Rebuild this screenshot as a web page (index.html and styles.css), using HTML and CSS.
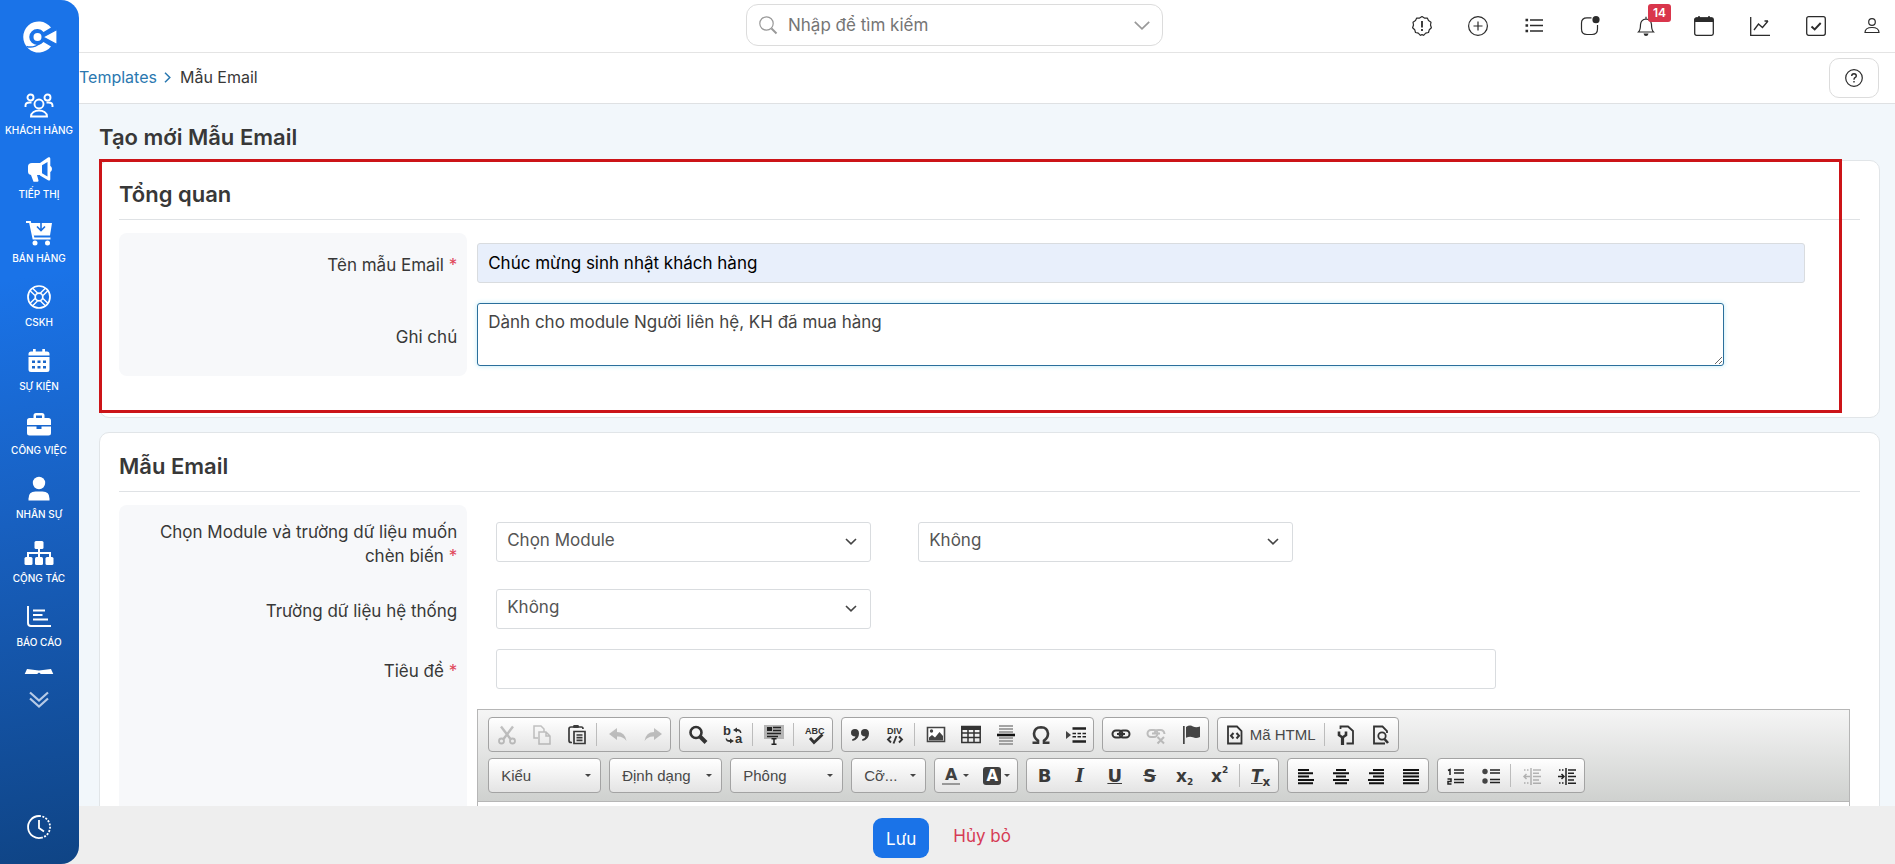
FILE: index.html
```html
<!DOCTYPE html>
<html lang="vi">
<head>
<meta charset="utf-8">
<meta name="viewport" content="width=device-width, initial-scale=1">
<title>Tạo mới Mẫu Email</title>
<link rel="stylesheet" href="styles.css">
</head>
<body>
<div class="app">
  <aside class="sidebar">
    <a class="logo" href="#" aria-label="CRM"><svg viewBox="0 0 35 32"><path d="M29 6.500A15.500 15.500 0 1 0 29 25.500L21.500 21A8 8 0 1 1 21.500 11Z" fill="#fff"/><path d="M4.500 25.500q7 2 14-3.500" stroke="#1a73e8" stroke-width="1.500" fill="none"/><path d="M21 16 35 8.500v15Z" fill="#fff" stroke="#1a73e8" stroke-width="1.200"/><circle cx="15.500" cy="16" r="4" fill="#fff"/></svg></a>
    <nav class="menu">
      <a class="menu-item" href="#"><svg class="menu-icon" viewBox="0 0 30 26" fill="none" stroke="#fff" stroke-width="1.900"><circle cx="15" cy="12" r="4.500"/><circle cx="6.500" cy="5.500" r="3"/><circle cx="23.500" cy="5.500" r="3"/><path d="M7 24.500c0-8 16-8 16 0ZM1.500 15v-1.500q0-3 4-3h2M28.500 15v-1.500q0-3-4-3h-2"/></svg><span>KHÁCH HÀNG</span></a>
      <a class="menu-item" href="#"><svg class="menu-icon" viewBox="0 0 30 26" fill="#fff"><path fill-rule="evenodd" d="M24 1.500c1.500-.7 2.300-.2 2.300 1.300V10c2.200 1 2.200 5 0 6v7c0 1.500-1 2-2.300 1.200L16 19.500V7ZM23.500 6 18 9.200v8l5.500 3.300Z"/><path d="M17 7v12h-4l1.500 5.500q0 1.300-1.200 1.300H9.500L7 19q-3-.5-3-3.500v-5Q4 7 8 7Z"/></svg><span>TIẾP THỊ</span></a>
      <a class="menu-item" href="#"><svg class="menu-icon" viewBox="0 0 30 26"><path d="M2 2h4l3.500 16.500h17" fill="none" stroke="#fff" stroke-width="2"/><path d="M6.500 3H28l-2 12.500H9.500Z" fill="#fff"/><path d="M17 1v9m-4-3.500 4 4 4-4" fill="none" stroke="#1a6edf" stroke-width="1.600"/><circle cx="11" cy="23" r="2.500" fill="#fff"/><circle cx="23.500" cy="23" r="2.500" fill="#fff"/></svg><span>BÁN HÀNG</span></a>
      <a class="menu-item" href="#"><svg class="menu-icon" viewBox="0 0 30 26" fill="none" stroke="#fff" stroke-width="1.700"><circle cx="15" cy="13" r="11"/><circle cx="15" cy="13" r="3.800"/><path d="m16.500 9 4.600-4.600M19 11.500l4.600-4.600M13.500 9 8.900 4.400M11 11.500 6.400 6.900M16.500 17l4.600 4.600M19 14.500l4.600 4.600M13.500 17l-4.600 4.600M11 14.500l-4.600 4.600" stroke-width="1.400"/></svg><span>CSKH</span></a>
      <a class="menu-item" href="#"><svg class="menu-icon" viewBox="0 0 30 26"><path d="M4.500 7.500V6q0-2.500 2.500-2.500h2V1h2.700v2.500h6.600V1H21v2.500h2q2.500 0 2.500 2.500v1.500ZM4.500 9h21v12.500q0 2.500-2.500 2.500H7q-2.500 0-2.500-2.500Z" fill="#fff"/><path d="M8 12.500h3V15H8zm5.500 0h3V15h-3zm5.500 0h3V15h-3zM8 18h3v2.500H8zm5.500 0h3v2.500h-3zm5.500 0h3v2.500h-3z" fill="#1b66c9"/></svg><span>SỰ KIỆN</span></a>
      <a class="menu-item" href="#"><svg class="menu-icon" viewBox="0 0 30 26"><path d="M9.500 6V3.500Q9.500 1 12 1h6q2.500 0 2.500 2.500V6h4Q27 6 27 8.500V13H3V8.500Q3 6 5.500 6Zm2.500 0h6V3.500h-6Z" fill="#fff" fill-rule="evenodd"/><path d="M3 14.500h9.500V17h5v-2.500H27v6.500q0 2.500-2.500 2.500h-19Q3 23.500 3 21Z" fill="#fff"/></svg><span>CÔNG VIỆC</span></a>
      <a class="menu-item" href="#"><svg class="menu-icon" viewBox="0 0 30 26" fill="#fff"><circle cx="15" cy="7" r="6.200"/><path d="M4.500 24.500v-2q0-7 7-7h7q7 0 7 7v2Z"/></svg><span>NHÂN SỰ</span></a>
      <a class="menu-item" href="#"><svg class="menu-icon" viewBox="0 0 30 26"><path d="M15 7v10M4 17v-4h22v4" fill="none" stroke="#fff" stroke-width="2"/><g fill="#fff"><rect x="10.500" y="1" width="9" height="8" rx="1.500"/><rect y="17" x=".5" width="8" height="8" rx="1.500"/><rect x="11" y="17" width="8" height="8" rx="1.500"/><rect x="21.500" y="17" width="8" height="8" rx="1.500"/></g></svg><span>CỘNG TÁC</span></a>
      <a class="menu-item" href="#"><svg class="menu-icon" viewBox="0 0 30 26" fill="none" stroke="#fff" stroke-width="1.900"><path d="M4 2v17q0 3 3 3h20M9 6.500h12M9 11h9.500M9 15.500h15"/></svg><span>BÁO CÁO</span></a>
      <a class="menu-item" href="#" aria-label="Kho"><svg class="menu-icon" viewBox="0 0 30 26" fill="#fff"><path d="M3 1l12 1.500L27 1l2.500 5.500h-12L15 4.500l-2.500 2h-12Z"/><path d="M3 11l10 2 2-3 2 3 10-2v10l-12 4-12-4Z"/></svg></a>
    </nav>
    <button class="side-button" aria-label="Xem thêm"><svg class="more-icon" viewBox="0 0 20 17" fill="none" stroke="#b6cae6" stroke-width="2.200"><path d="m1 1.500 9 8 9-8M1 7.500l9 8 9-8"/></svg></button>
    <button class="side-button side-clock" aria-label="Lịch sử"><svg class="clock-icon" viewBox="0 0 24 24" fill="none" stroke="#fff" stroke-width="1.800"><path d="M12 1a11 11 0 1 0 3 21.600M12 5v8l5 3.500"/><path d="M12 1a11 11 0 0 1 3 21.600" stroke-dasharray="2 1.400"/></svg></button>
  </aside>

  <div class="page">
    <header class="topbar">
      <form class="search">
        <svg class="search-icon" viewBox="0 0 18 18" fill="none" stroke="#999"><circle cx="7.500" cy="7.500" r="6.700" stroke-width="1.200"/><path d="m12.500 12.500 5 5" stroke-width="2"/></svg>
        <input class="search-input" type="search" placeholder="Nhập để tìm kiếm" aria-label="Nhập để tìm kiếm">
        <button class="search-toggle" type="button" aria-label="Tùy chọn"><svg viewBox="0 0 16 9" fill="none" stroke="#999" stroke-width="1.700"><path d="m.8.800 7.200 7 7.200-7"/></svg></button>
      </form>
      <div class="tools">
        <button class="tool" aria-label="Thông tin"><svg viewBox="0 0 20 20" fill="none" stroke="#2b2b2b" stroke-width="1.200"><path d="M10 .6 12.400 2.100 15.300 2 16.500 4.600 19 6.200 18.500 9 19.400 11.700 17.300 13.700 16.500 16.500 13.700 17.200 11.600 19.300 10 18.600 8.400 19.300 6.300 17.200 3.500 16.500 2.700 13.700.6 11.700 1.500 9 1 6.200 3.500 4.600 4.700 2 7.600 2.100Z" stroke-linejoin="round"/><path d="M10 5v6.500m0 1.500v2" stroke-width="1.800"/></svg></button>
        <button class="tool" aria-label="Thêm"><svg viewBox="0 0 20 20" fill="none" stroke="#2b2b2b" stroke-width="1.200"><circle cx="10" cy="10" r="9.400"/><path d="M10 5.500v9M5.500 10h9"/></svg></button>
        <button class="tool" aria-label="Danh sách"><svg viewBox="0 0 20 20" fill="none" stroke="#2b2b2b"><path d="M6 4h13M6 9.500h13M6 15h13" stroke-width="1.300"/><path d="M1.500 4h2.600M1.500 9.500h2.600M1.500 15h2.600" stroke-width="2.300"/></svg></button>
        <button class="tool" aria-label="Trạng thái"><svg viewBox="0 0 20 20" fill="none" stroke="#2b2b2b" stroke-width="1.200"><path d="M11.500 1.800H7Q1.500 1.800 1.500 7v6q0 5.500 5.500 5.500h5q5.500 0 5.500-5.500V9"/><circle cx="16" cy="3.700" r="3.600" fill="#2b2b2b" stroke="none"/></svg></button>
        <button class="tool tool-bell" aria-label="Thông báo"><svg viewBox="0 0 20 20" fill="none" stroke="#2b2b2b" stroke-width="1.200"><path d="M2.500 16q2-2 2-7.500Q5 3.500 10 3q5 .5 5.500 5.500 0 5.500 2 7.500ZM10 3V.800"/><path d="M7.500 17.500h5q-.5 2.500-2.500 2.500t-2.500-2.500Z" fill="#2b2b2b" stroke="none"/></svg><span class="badge">14</span></button>
        <button class="tool" aria-label="Lịch"><svg viewBox="0 0 20 20"><rect x=".7" y="2" width="18.600" height="17.300" rx="1.800" fill="none" stroke="#2b2b2b" stroke-width="1.300"/><path d="M.5 6V3.500Q.5 1.500 2.500 1.500H4V.300h2v1.200h8V.300h2v1.200h1.500q2 0 2 2V6Z" fill="#2b2b2b"/></svg></button>
        <button class="tool" aria-label="Thống kê"><svg viewBox="0 0 20 20" fill="none" stroke="#2b2b2b" stroke-width="1.300"><path d="M.7 1v18.300H20M4 14l4.500-6 4 3.500L18 5M14.500 5H18"/></svg></button>
        <button class="tool" aria-label="Công việc"><svg viewBox="0 0 20 20" fill="none" stroke="#2b2b2b" stroke-width="1.300"><rect x=".7" y=".7" width="18.600" height="18.600" rx="2"/><path d="m5.500 10.500 3.200 3 6-6.500" stroke-width="1.900"/></svg></button>
        <button class="tool" aria-label="Tài khoản"><svg viewBox="0 0 20 20" fill="none" stroke="#2b2b2b" stroke-width="1.200"><circle cx="10" cy="6" r="3.300"/><path d="M3 16.500q0-5 7-5t7 5Z"/></svg></button>
      </div>
    </header>

    <div class="crumbs">
      <nav class="crumb-list" aria-label="Đường dẫn"><a class="crumb-link" href="#">Templates</a><svg class="crumb-sep" viewBox="0 0 7 11" fill="none" stroke="#2a78b0" stroke-width="1.500"><path d="m1 .800 4.800 4.700L1 10.200"/></svg><span>Mẫu Email</span></nav>
      <button class="help" aria-label="Trợ giúp"><svg viewBox="0 0 18 18" fill="none" stroke="#2b2b2b" stroke-width="1.200"><circle cx="9" cy="9" r="8.300"/><path d="M6.700 7q0-2.300 2.300-2.300T11.300 7q0 1-1.300 1.700Q9 9.300 9 10.700M9 11.900v1.500" stroke-width="1.400"/></svg></button>
    </div>

    <main class="content">
      <h1 class="page-title">Tạo mới Mẫu Email</h1>

      <section class="card card-overview">
        <h2 class="card-title">Tổng quan</h2>
        <div class="row row-first">
          <label class="row-label" for="name"><span>Tên mẫu Email <b class="req">*</b></span></label>
          <div class="row-field"><input class="control control-filled" id="name" type="text" value="Chúc mừng sinh nhật khách hàng"></div>
        </div>
        <div class="row row-last">
          <label class="row-label" for="note">Ghi chú</label>
          <div class="row-field"><textarea class="control control-note" id="note" autofocus>Dành cho module Người liên hệ, KH đã mua hàng</textarea></div>
        </div>
        <div class="highlight"></div>
      </section>

      <section class="card">
        <h2 class="card-title">Mẫu Email</h2>
        <div class="row row-first row-module">
          <label class="row-label" for="module"><span>Chọn Module và trường dữ liệu muốn chèn biến <b class="req">*</b></span></label>
          <div class="row-field row-field-inset">
            <div class="select"><select class="control" id="module"><option>Chọn Module</option></select><svg class="select-arrow" viewBox="0 0 12 7"><path d="m1 1 5 4.800L11 1"/></svg></div>
            <div class="select"><select class="control" aria-label="Trường dữ liệu"><option>Không</option></select><svg class="select-arrow" viewBox="0 0 12 7"><path d="m1 1 5 4.800L11 1"/></svg></div>
          </div>
        </div>
        <div class="row">
          <label class="row-label" for="system">Trường dữ liệu hệ thống</label>
          <div class="row-field row-field-inset">
            <div class="select"><select class="control" id="system"><option>Không</option></select><svg class="select-arrow" viewBox="0 0 12 7"><path d="m1 1 5 4.800L11 1"/></svg></div>
          </div>
        </div>
        <div class="row">
          <label class="row-label" for="subject"><span>Tiêu đề <b class="req">*</b></span></label>
          <div class="row-field row-field-inset"><input class="control control-subject" id="subject" type="text"></div>
        </div>
        <div class="row row-last row-editor">
          <div class="row-label"></div>
          <div class="row-field">
            <div class="editor">
              <div class="toolbar" role="toolbar">
                <div class="tb-row">
                  <div class="tb-group">
                    <button class="tb off" aria-label="Cắt"><svg viewBox="0 0 20 20" fill="none" stroke="#444" stroke-width="2.400"><path d="M4 1.500 13.500 14M16 1.500 6.500 14"/><circle cx="4.500" cy="16" r="2.500" stroke-width="1.800"/><circle cx="15.500" cy="16" r="2.500" stroke-width="1.800"/></svg></button>
                    <button class="tb off" aria-label="Sao chép"><svg viewBox="0 0 20 20" fill="none" stroke="#444" stroke-width="1.500"><path d="M6 13H2V1h7l3 3v3M7 7h7l4 4v8H7ZM14 7v4h4"/></svg></button>
                    <button class="tb" aria-label="Dán"><svg viewBox="0 0 20 20" fill="none" stroke="#3a3a3a" stroke-width="1.700"><path d="M5 17.500H4q-2 0-2-2V4q0-2 2-2h10.500q1.500 0 1.500 2"/><path d="M6 1.500h6M7 6.500h11v12H7ZM9.500 10h6m-6 2.700h6m-6 2.700h6"/><path d="M6.500 0h5v3h-5z" fill="#3a3a3a" stroke="none"/></svg></button>
                    <i class="tb-sep"></i>
                    <button class="tb off" aria-label="Hoàn tác"><svg viewBox="0 0 20 20" fill="#444"><path d="m1 9 8-6v4q8 0 9.500 9Q15 11 9 11.500V15Z"/></svg></button>
                    <button class="tb off" aria-label="Làm lại"><svg viewBox="0 0 20 20" fill="#444"><path d="m19 9-8-6v4q-8 0-9.500 9Q5 11 11 11.500V15Z"/></svg></button>
                  </div>
                  <div class="tb-group">
                    <button class="tb" aria-label="Tìm kiếm"><svg viewBox="0 0 20 20" fill="none" stroke="#333"><circle cx="8" cy="7.500" r="5.500" stroke-width="2.600"/><path d="m12 11.500 6 6" stroke-width="4"/></svg></button>
                    <button class="tb" aria-label="Thay thế"><svg viewBox="0 0 20 20" fill="#333"><text x="0" y="10" class="glyph glyph-lg">b</text><text x="12" y="18" class="glyph glyph-lg">a</text><path d="m10 5 4-2.500V4q4 0 4.500 4H17q0-2-3-2v1.500ZM11 16l-4 2.500V17q-4 0-4.500-3.500H4Q4 15 7 15v-1.500Z"/></svg></button>
                    <i class="tb-sep"></i>
                    <button class="tb" aria-label="Chọn tất cả"><svg viewBox="0 0 20 20"><path d="M0 0h20v14H0z" fill="#b5b5b5"/><path d="M3 2h5v4H3z" fill="#222"/><path d="M9 2.500h8M9 5.500h8M3 8.500h14M3 11.500h11M10 13v6M7.500 13.700h5M7.500 19.200h5" stroke="#222" stroke-width="1.500" fill="none"/></svg></button>
                    <i class="tb-sep"></i>
                    <button class="tb" aria-label="Kiểm tra chính tả"><svg viewBox="0 0 20 20" fill="#333"><text x="0" y="9" class="glyph">ABC</text><path d="m5 13 4 4.500 8.500-8" fill="none" stroke="#333" stroke-width="2.800"/></svg></button>
                  </div>
                  <div class="tb-group">
                    <button class="tb" aria-label="Trích dẫn"><svg viewBox="0 0 20 20" fill="#3a3a3a"><path d="M5 4q4 0 4 4.500 0 6-6.500 7.500l-.5-1.500Q5.500 13 5.500 11.500 1 11.500 1 7.700 1 4 5 4Zm10 0q4 0 4 4.500 0 6-6.500 7.500l-.5-1.500q3.500-1.500 3.500-3-4.500 0-4.500-3.800Q11 4 15 4Z"/></svg></button>
                    <button class="tb" aria-label="Khối DIV"><svg viewBox="0 0 20 20" fill="#333"><text x="2" y="9" class="glyph">DIV</text><path d="M6 11.500 3 14.500l3 3M14 11.500l3 3-3 3M11.500 11l-3 7.500" fill="none" stroke="#333" stroke-width="1.900"/></svg></button>
                    <i class="tb-sep"></i>
                    <button class="tb" aria-label="Hình ảnh"><svg viewBox="0 0 20 20" fill="#444"><path d="M1.500 2.500h17v14h-17Z" fill="#fff" stroke="#444" stroke-width="1.600"/><circle cx="5.500" cy="6" r="1.700"/><path d="M3 15.500v-3L6 10l3 2.500L13.500 7l3.500 4v4.500Z"/></svg></button>
                    <button class="tb" aria-label="Bảng"><svg viewBox="0 0 20 20" fill="none" stroke="#333" stroke-width="1.500"><path d="M.8 1.500h18.400v16H.8ZM.8 8h18.400M.8 12.500h18.400M7 4v13.500M13 4v13.500"/><path d="M0 1h20v4H0z" fill="#333" stroke="none"/></svg></button>
                    <button class="tb" aria-label="Đường kẻ ngang"><svg viewBox="0 0 20 20" fill="none" stroke="#888" stroke-width="1.400"><path d="M3 1h14M3 4h14M3 7h14M3 13h14M3 16h14M3 19h14"/><path d="M1 10h18" stroke="#111" stroke-width="2.600"/></svg></button>
                    <button class="tb" aria-label="Ký tự đặc biệt"><svg viewBox="0 0 20 20" fill="none" stroke="#3a3a3a" stroke-width="2.600"><path d="M1.500 17.700h5.500v-2Q3 13 3 8.500 3.500 2.500 10 2.300q6.500.2 7 6.200 0 4.500-4 7.200v2h5.500"/></svg></button>
                    <button class="tb" aria-label="Ngắt trang"><svg viewBox="0 0 20 20" stroke="#222"><path d="m0 6 5 4-5 4Z" fill="#444" stroke="none"/><path d="M6.500 3.500H20M6.500 16.500H20" stroke-width="2.600"/><path d="M6.500 8.500H20M6.500 11.800H20" stroke-width="1.500" stroke-dasharray="3.500 1.500"/></svg></button>
                  </div>
                  <div class="tb-group">
                    <button class="tb" aria-label="Liên kết"><svg viewBox="0 0 20 20" fill="none" stroke="#333" stroke-width="2"><rect x="1.500" y="5.500" width="10" height="7" rx="3.500"/><rect x="8.500" y="5.500" width="10" height="7" rx="3.500"/><path d="M6 9h8"/></svg></button>
                    <button class="tb off" aria-label="Bỏ liên kết"><svg viewBox="0 0 20 20" fill="none" stroke="#444" stroke-width="2"><rect x="1.500" y="5" width="10" height="7" rx="3.500"/><path d="M8.500 9.500q0-4.500 4-4.500h2q3.500 0 4 4M6 8.500h8M11.500 12l6.500 6.500m0-6.500L11.500 18.500"/></svg></button>
                    <button class="tb" aria-label="Neo"><svg viewBox="0 0 20 20" fill="#444"><path d="M2 1h1.700v18H2zM5 2q4-2.500 7-.5 3 1.500 7 0V12q-4 2-7 .3-3-1.500-7 .4Z"/></svg></button>
                  </div>
                  <div class="tb-group">
                    <button class="tb tb-source"><svg viewBox="0 0 20 20" fill="none" stroke="#333" stroke-width="1.800"><path d="M3 1.500h9l4.500 4.500v12.500H3Z"/><path d="M8.500 8 6 10.800l2.500 2.700M11.500 8l2.500 2.800-2.500 2.700" stroke-width="2"/></svg>Mã HTML</button>
                    <i class="tb-sep"></i>
                    <button class="tb" aria-label="Thuộc tính"><svg viewBox="0 0 20 20" fill="none" stroke="#333" stroke-width="1.800"><path d="M4.500 4V1.500H12l5 4.500v12.500h-6.500"/><path d="M6.500 11.500V20" stroke-width="3.200"/><path d="M3 6.500V10l3.500 2.500L10 10V6.500" stroke-width="2.600"/></svg></button>
                    <button class="tb" aria-label="Xem trước"><svg viewBox="0 0 20 20" fill="none" stroke="#333" stroke-width="1.800"><path d="M14 18.500H3v-17h8.500l4.500 4.500v2"/><circle cx="11" cy="11" r="3.700"/><path d="m13.500 14 3.500 4" stroke-width="2.600"/></svg></button>
                  </div>
                </div>
                <div class="tb-row">
                  <button class="tb-combo">Kiểu</button>
                  <button class="tb-combo">Định dạng</button>
                  <button class="tb-combo">Phông</button>
                  <button class="tb-combo tb-combo-size">Cỡ...</button>
                  <div class="tb-group">
                    <button class="tb tb-color" aria-label="Màu chữ"><span class="color-text">A</span></button>
                    <button class="tb tb-color" aria-label="Màu nền"><span class="color-back">A</span></button>
                  </div>
                  <div class="tb-group">
                    <button class="tb tb-letter">B</button>
                    <button class="tb tb-letter tb-italic">I</button>
                    <button class="tb tb-letter tb-under">U</button>
                    <button class="tb tb-letter tb-strike">S</button>
                    <button class="tb tb-letter tb-script">x<sub>2</sub></button>
                    <button class="tb tb-letter tb-script">x<sup>2</sup></button>
                    <i class="tb-sep"></i>
                    <button class="tb tb-letter tb-script tb-clear"><u><i>T</i></u><sub>x</sub></button>
                  </div>
                  <div class="tb-group">
                    <button class="tb" aria-label="Canh trái"><svg viewBox="0 0 20 20" stroke="#111" stroke-width="2"><path d="M2 4h11M2 7.300h15M2 10.600h11M2 13.900h16M2 17.200h15"/></svg></button>
                    <button class="tb" aria-label="Canh giữa"><svg viewBox="0 0 20 20" stroke="#111" stroke-width="2"><path d="M5 4h10M2 7.300h16M5 10.600h10M2 13.900h16M4 17.200h12"/></svg></button>
                    <button class="tb" aria-label="Canh phải"><svg viewBox="0 0 20 20" stroke="#111" stroke-width="2"><path d="M7 4h11M3 7.300h15M7 10.600h11M2 13.900h16M3 17.200h15"/></svg></button>
                    <button class="tb" aria-label="Canh đều"><svg viewBox="0 0 20 20" stroke="#111" stroke-width="2"><path d="M2 4h16M2 7.300h16M2 10.600h16M2 13.900h16M2 17.200h16"/></svg></button>
                  </div>
                  <div class="tb-group">
                    <button class="tb" aria-label="Danh sách số"><svg viewBox="0 0 20 20" fill="none" stroke="#222" stroke-width="1.500"><path d="M2 4.500 4 3.500V9M1.500 13H5v2.500H2V18h3.500M8 4h10M8 7h10M8 13.500h10M8 16.500h10"/></svg></button>
                    <button class="tb" aria-label="Danh sách chấm"><svg viewBox="0 0 20 20" fill="#444" stroke="#222" stroke-width="1.500"><path d="M9 4h10M9 7h10M9 13.500h10M9 16.500h10"/><circle cx="4" cy="5.500" r="2.700" stroke="none"/><circle cx="4" cy="15" r="2.700" stroke="none"/></svg></button>
                    <i class="tb-sep"></i>
                    <button class="tb off" aria-label="Giảm thụt lề"><svg viewBox="0 0 20 20" fill="none" stroke="#222" stroke-width="1.500"><path d="M9 2v17M11 4h8M11 7.300h6M11 10.600h8M11 13.900h6M11 17.200h8M2 10.500h6M4.500 8 2 10.500 4.500 13"/><path d="M2 4h6M2 17h6" stroke-dasharray="1.500 1.500"/></svg></button>
                    <button class="tb" aria-label="Tăng thụt lề"><svg viewBox="0 0 20 20" fill="none" stroke="#222" stroke-width="1.500"><path d="M9 2v17M11 4h8M11 7.300h6M11 10.600h8M11 13.900h6M11 17.200h8M1 10.500h6M4.500 8 7 10.500 4.500 13"/><path d="M2 4h6M2 17h6" stroke-dasharray="1.500 1.500"/></svg></button>
                  </div>
                </div>
              </div>
              <div class="editor-body" contenteditable="true" role="textbox" aria-label="Nội dung"></div>
            </div>
          </div>
        </div>
      </section>
    </main>

    <footer class="actions">
      <button class="save">Lưu</button>
      <a class="cancel" href="#">Hủy bỏ</a>
    </footer>
  </div>
</div>
<script src="script.js"></script>
</body>
</html>
```
FILE: styles.css
```css
* { box-sizing: border-box; }

body {
  margin: 0;
  font: 17px/24px Inter, "Noto Sans", sans-serif;
  color: #383838;
  background: #fff;
}

a { text-decoration: none; }

button {
  font: inherit;
  color: inherit;
  padding: 0;
  border: 0;
  background: none;
  cursor: pointer;
}

svg { display: block; overflow: visible; }

.app { display: flex; height: 100vh; background: linear-gradient(#fff 50%, #eee 50%); }

/* Sidebar */
.sidebar {
  flex: none;
  width: 79px;
  display: flex;
  flex-direction: column;
  align-items: center;
  padding: 21px 1px 22px 0;
  border-radius: 0 18px 18px 0;
  background: linear-gradient(170deg, #1a73e8 32%, #1860c0 60%, #0f4485 100%);
}
.logo { width: 35px; margin-bottom: 39px; }
.menu { width: 100%; height: calc(100vh - 282px); max-height: 582px; overflow: hidden; }
.menu-item {
  display: flex;
  flex-direction: column;
  align-items: center;
  gap: 4px;
  height: 64px;
  font-size: 10px;
  font-weight: 500;
  line-height: 16px;
  white-space: nowrap;
  color: #fff;
}
.menu-icon { width: 30px; height: 26px; }
.side-button { margin-top: 17px; }
.more-icon { width: 20px; height: 17px; }
.side-clock { margin-top: auto; padding-bottom: 3px; }
.clock-icon { width: 24px; height: 24px; }

.page { flex: 1; min-width: 0; display: flex; flex-direction: column; }

/* Top bar */
.topbar {
  flex: none;
  display: grid;
  grid-template-columns: 667fr 417px 732fr;
  height: 53px;
  padding-top: 4px;
  background: #fff;
  border-bottom: 1px solid #e4e4e4;
}
.search {
  grid-column: 2;
  display: flex;
  align-items: center;
  height: 42px;
  padding: 0 12px;
  border: 1px solid #dcdcdc;
  border-radius: 12px;
}
.search-icon { width: 18px; height: 18px; }
.search-input {
  flex: 1;
  min-width: 0;
  padding: 0 11px;
  border: 0;
  outline: 0;
  font: inherit;
  background: none;
}
.search-input::placeholder { color: #757575; }
.search-toggle { width: 16px; }
.tools {
  display: flex;
  justify-content: flex-end;
  align-items: center;
  gap: 32px;
  height: 44px;
  padding-right: 11px;
}
.tool { position: relative; width: 24px; display: flex; justify-content: center; }
.tool svg { width: 20px; height: 20px; }
.tool-bell { margin-right: 2px; }
.badge {
  position: absolute;
  left: 14px;
  top: -12px;
  padding: 0 5px;
  border-radius: 3px;
  font-size: 12px;
  font-weight: 600;
  line-height: 18px;
  color: #fff;
  background: #d9364c;
}

/* Breadcrumbs */
.crumbs {
  flex: none;
  display: flex;
  justify-content: space-between;
  align-items: center;
  height: 51px;
  padding-right: 16px;
  background: #fff;
  border-bottom: 1px solid #dfe1e3;
}
.crumb-list { display: flex; align-items: center; gap: 7px; padding-bottom: 2px; font-size: 16px; }
.crumb-link { color: #2a78b0; }
.crumb-sep { width: 7px; height: 11px; margin-right: 2px; }
.help {
  display: flex;
  align-items: center;
  justify-content: center;
  width: 50px;
  height: 40px;
  border: 1px solid #dcdcdc;
  border-radius: 10px;
}
.help svg { width: 18px; height: 18px; }

/* Content */
.content {
  flex: 1;
  min-height: 0;
  overflow: hidden;
  padding: 19px 15px 0 20px;
  background: #f2f7fb;
}
.page-title, .card-title { font-size: 22px; font-weight: 600; line-height: 28px; }
.page-title { margin: 0 0 9px; }
.card {
  position: relative;
  margin-bottom: 14px;
  padding: 0 19px 10px;
  background: #fff;
  border: 1px solid #e1e5e8;
  border-radius: 10px;
}
.card-overview { padding-bottom: 41px; }
.card-title {
  margin: 0 0 13px;
  padding: 19px 0 11px;
  border-bottom: 1px solid #dfe2e5;
}
.highlight {
  position: absolute;
  inset: -2px 37px 4px -1px;
  border: 3px solid #cc1418;
  pointer-events: none;
}

/* Form rows */
.row { display: grid; grid-template-columns: 20% 1fr; }
.row-label {
  display: flex;
  align-items: center;
  justify-content: flex-end;
  padding: 4px 10px 0 20px;
  text-align: right;
  background: #f7f8fa;
}
.row-first .row-label { border-radius: 8px 8px 0 0; }
.row-last .row-label { border-radius: 0 0 8px 8px; }
.row-field { display: flex; padding: 10px; gap: 47px; }
.row-field-inset { padding-left: 29px; }
.row-module .row-field { padding-top: 17px; padding-bottom: 17px; }
.req { font-weight: 400; color: #e04458; }
.control {
  height: 40px;
  padding: 0 10px;
  border: 1px solid #d9dcdf;
  border-radius: 3px;
  font: inherit;
  color: #444;
  background: #fff;
}
.control-filled { width: 96.7%; color: #000; background: #e8effb; }
.control-note {
  width: 90.8%;
  height: 63px;
  padding: 6px 10px;
  border-color: #2b6f9c;
  outline: 0;
  box-shadow: 0 0 5px #bdeaf7;
  resize: both;
}
.control-subject { width: 1000px; }
.select { position: relative; width: 375px; }
.select .control { width: 100%; padding-bottom: 4px; appearance: none; color: #555; }
.select-arrow {
  position: absolute;
  right: 14px;
  top: 16px;
  width: 12px;
  height: 7px;
  fill: none;
  stroke: #444;
  stroke-width: 1.6;
  pointer-events: none;
}

/* Editor */
.editor { flex: 1; min-width: 0; border: 1px solid #b6b6b6; font-family: "Liberation Sans", Arial, sans-serif; }
.toolbar {
  display: flex;
  flex-direction: column;
  gap: 6px;
  padding: 7px 10px 8px;
  border-bottom: 1px solid #b6b6b6;
  background: linear-gradient(#f5f5f5, #cfd1cf);
}
.tb-row { display: flex; gap: 8px; }
.tb-group, .tb-combo {
  display: flex;
  align-items: center;
  height: 35px;
  border: 1px solid #a3a3a3;
  border-radius: 4px;
  background: linear-gradient(#fff, #e4e4e4);
}
.tb { display: flex; align-items: center; justify-content: center; width: 35px; height: 33px; }
.tb svg { width: 20px; height: 20px; }
.off { opacity: .3; }
.tb-sep { width: 1px; height: 23px; margin: 0 3px 0 2px; background: #bcbcbc; }
.tb-source { width: 104px; gap: 5px; font-size: 15px; color: #484848; }
.tb-combo { width: 113px; justify-content: space-between; padding: 0 9px 0 12px; font-size: 15px; color: #484848; }
.tb-combo-size { width: 75px; }
.tb-combo::after, .tb-color::after {
  content: "";
  border: 3px solid transparent;
  border-top-color: #444;
  border-bottom: 0;
}
.tb-color { width: 41px; gap: 3px; font: bold 16px/18px "DejaVu Sans", sans-serif; }
.color-text { width: 18px; line-height: 17px; color: #404040; border-bottom: 2px solid #999; }
.color-back { width: 18px; line-height: 18px; border-radius: 3px; color: #fff; background: #404040; font-size: 15px; }
.tb-letter { font: bold 18px/20px "DejaVu Sans", sans-serif; color: #3a3a3a; }
.tb-italic { font-family: "DejaVu Serif", serif; font-style: italic; }
.tb-under { text-decoration: underline; }
.tb-strike { text-decoration: line-through; }
.tb-script { font-size: 17px; }
.tb-script sub, .tb-script sup { font-size: 9px; line-height: 9px; }
.tb-script sub { align-self: flex-end; padding-bottom: 5px; }
.tb-script sup { align-self: flex-start; padding-top: 7px; }
.tb-clear sub { font-size: 12px; }
.glyph { font: bold 9px "Liberation Sans", sans-serif; }
.glyph-lg { font-size: 13px; }
.editor-body { height: 240px; background: #fff; }

/* Footer */
.actions {
  flex: none;
  display: flex;
  justify-content: center;
  gap: 24px;
  height: 58px;
  padding: 12px 90px 6px 0;
  background: #eee;
}
.save {
  height: 40px;
  padding: 2px 13px 0;
  border-radius: 9px;
  color: #fff;
  background: #1a73e8;
}
.cancel { padding-top: 6px; color: #d63b55; }
```
FILE: script.js
```js
const note = document.getElementById("note");
note.focus();
note.setSelectionRange(note.value.length, note.value.length);
```
